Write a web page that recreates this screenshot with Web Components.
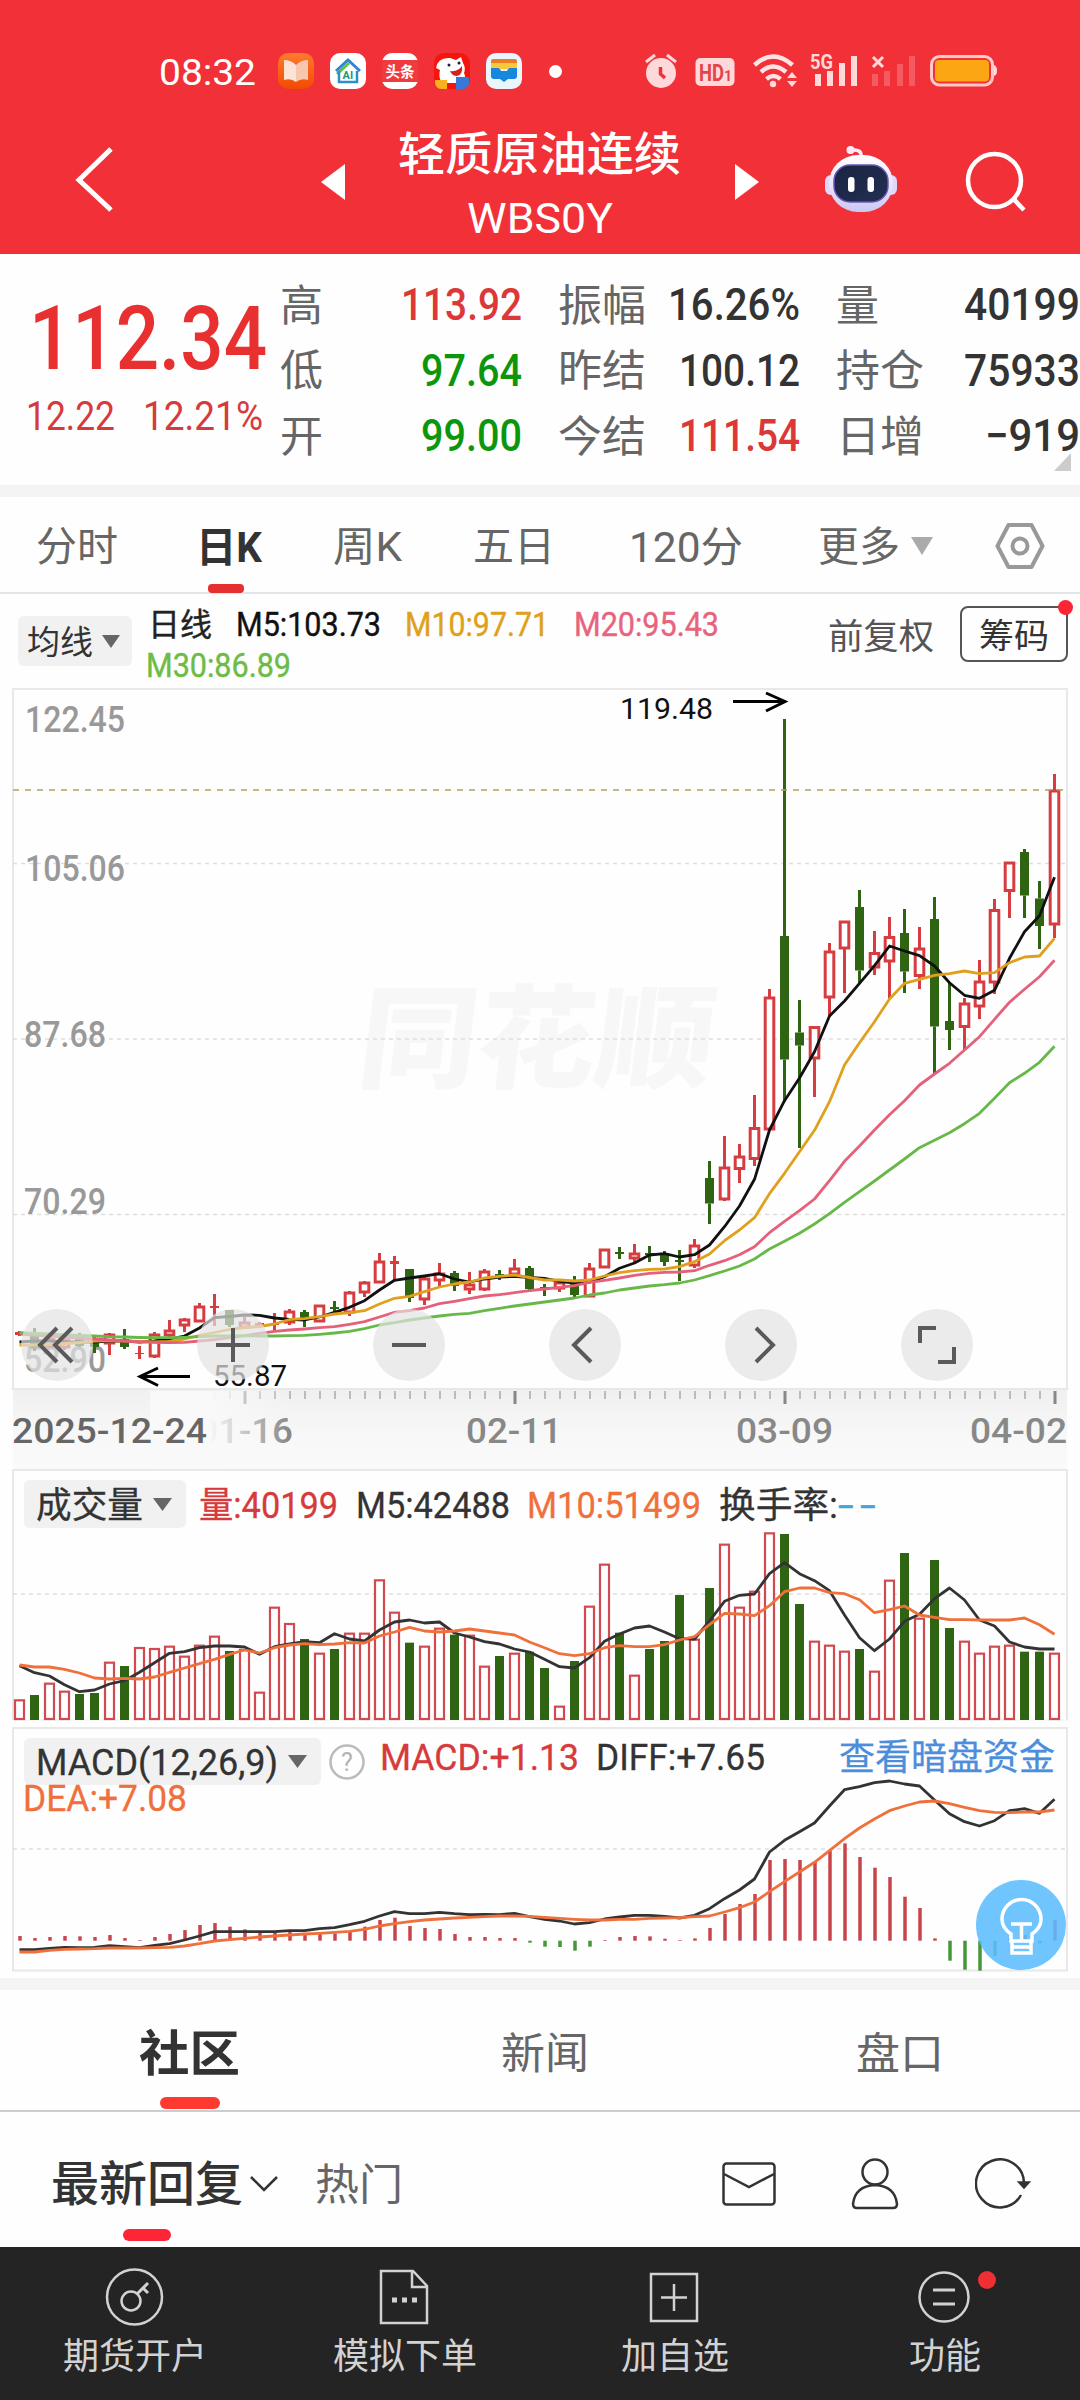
<!DOCTYPE html>
<html lang="zh-CN">
<head>
<meta charset="UTF-8">
<title>轻质原油连续 WBS0Y</title>
<style>
  html, body {
    margin: 0;
    background: #fefefe;
  }
  body {
    width: 1080px;
    height: 2400px;
    overflow: hidden;
    font-family: Roboto, "Noto Sans CJK SC", sans-serif;
    color: #333;
  }
</style>
</head>
<body>
<stock-page></stock-page>

<script>
/* text squeezed or stretched to a fixed width (w), s is the font size */
class FitText extends HTMLElement {
  constructor() {
    super();
    this.attachShadow({ mode: "open" });
    this.shadowRoot.innerHTML = `
      <style>
        :host { display: block; flex: none; }
        span { display: inline-block; white-space: nowrap; transform-origin: 0 50%; }
      </style>
      <span><slot></slot></span>`;
  }
  connectedCallback() {
    const size = this.getAttribute("s");
    const width = Number(this.getAttribute("w"));
    this.style.fontSize = size + "px";
    this.style.width = width + "px";
    this.style.height = this.style.lineHeight = Math.round(size * 1.2) + "px";
    const span = this.shadowRoot.querySelector("span");
    const natural = span.getBoundingClientRect().width;
    span.style.transform = `translateY(1.5px) scaleX(${width / natural})`;
  }
}
customElements.define("fit-text", FitText);

/* base for the static sections */
class Section extends HTMLElement {
  constructor() {
    super();
    this.attachShadow({ mode: "open" });
  }
  connectedCallback() {
    const template = document.createElement("template");
    template.innerHTML = `<style>:host { display: block; } * { box-sizing: border-box; } svg { display: block; }${this.getStyles()}</style>${this.getTemplate()}`;
    this.shadowRoot.appendChild(template.content.cloneNode(true));
  }
}

class StatusBar extends Section {
  getStyles() {
    return `
      :host { height: 101px; color: #fff; }
      .row { display: flex; align-items: center; padding-top: 41px; height: 101px; }
      .apps { display: flex; gap: 16px; margin-left: 22px; }
      .dot { width: 13px; height: 13px; border-radius: 50%; background: #fff; margin-left: 27px; }
      .system { margin-left: 78px; }
    `;
  }
  getTemplate() {
    return `
      <div class="row">
        <fit-text w="97" s="37" style="margin-left:159px">08:32</fit-text>
        <div class="apps">
          <svg width="36" height="36" viewBox="0 0 36 36">
            <defs><linearGradient id="a" x2="0" y2="1"><stop stop-color="#ff7a2d"/><stop offset="1" stop-color="#f24a04"/></linearGradient></defs>
            <rect width="36" height="36" rx="10" fill="url(#a)"/>
            <path d="M6 7q7 0 12 5v17q-5-4-12-2z" fill="#fde3d6"/><path d="M30 7q-7 0-12 5v17q5-4 12-2z" fill="#f7c6ae"/>
          </svg>
          <svg width="36" height="36" viewBox="0 0 36 36">
            <rect width="36" height="36" rx="10" fill="#fff"/>
            <path d="M6 18L18 7l12 11" fill="none" stroke="#2e86d8" stroke-width="3"/>
            <path d="M7 21L19 10" stroke="#5cc14a" stroke-width="3"/>
            <path d="M9 18v11h18V18" fill="none" stroke="#2b8fc9" stroke-width="2.500"/>
            <text x="12.500" y="26" font-size="11" font-weight="700" fill="#22977f">AI</text>
          </svg>
          <svg width="36" height="36" viewBox="0 0 36 36">
            <rect width="36" height="36" rx="10" fill="#fff"/>
            <rect y="7" width="36" height="22" fill="#ef3b3d"/>
            <text x="3.500" y="23.500" font-size="14.500" font-weight="700" fill="#fff">头条</text>
          </svg>
          <svg width="36" height="36" viewBox="0 0 36 36">
            <rect width="36" height="36" rx="10" fill="#f5150c"/>
            <path d="M2 15Q4 4 16 5l6 2 5-3 2 6q3 5 1 10 4 8-8 10H8Q4 24 6 17z" fill="#fff"/>
            <path d="M16 18q8 1 12-5 1 9-5 10-5 0-7-5" fill="#d5221f"/>
            <circle cx="15" cy="12" r="1.500" fill="#222"/><circle cx="25" cy="10" r="1.500" fill="#222"/>
            <path d="M1 27h12v9H8q-6 0-7-6z" fill="#fbb11c"/><path d="M22 24h13v7q-2 5-7 5h-6z" fill="#3878d8"/>
          </svg>
          <svg width="36" height="36" viewBox="0 0 36 36">
            <rect width="36" height="36" rx="10" fill="#e9f6fd"/>
            <rect x="5" y="6" width="26" height="7" rx="2" fill="#ef7c22"/>
            <rect x="5" y="10" width="26" height="6" fill="#f8c73a"/>
            <path d="M5 15h7q2 0 3 3h6q1-3 3-3h7v8q0 3-3 3h-6l-4 3-4-3H8q-3 0-3-3z" fill="#1687dc"/>
          </svg>
        </div>
        <div class="dot"></div>
        <svg class="system" width="362" height="40" viewBox="640 51 362 40" fill="#ffd9d9">
          <circle cx="661" cy="73" r="15"/>
          <path d="M646 62l9-7M676 62l-9-7" stroke="#ffd9d9" stroke-width="3"/>
          <path d="M660.500 67v7l4.500 4" stroke="#f23038" stroke-width="3.500" fill="none"/>
          <rect x="695.500" y="58" width="39" height="28" rx="5"/>
          <text x="699" y="81" font-size="23" font-weight="700" fill="#e2444c" textLength="25" lengthAdjust="spacingAndGlyphs">HD</text>
          <text x="724" y="81" font-size="14" font-weight="700" fill="#e2444c">1</text>
          <g fill="none" stroke="#ffe3e3" stroke-width="4.500">
            <path d="M754.500 65q18.500-17 38 0M761 72q12-11 25 0M766.500 79q7-6 14 0"/>
          </g>
          <circle cx="773" cy="84" r="3.200"/>
          <path d="M787 78l5-6 5 6zM787 81h10l-5 6z"/>
          <text x="810" y="69" font-size="21" font-weight="700" textLength="23" lengthAdjust="spacingAndGlyphs">5G</text>
          <path d="M815 74h6v12h-6zM827 71h6v15h-6zM839 63h6v23h-6zM851 56h6v30h-6z"/>
          <path d="M873 57l10 10M883 57l-10 10" stroke="#ffd9d9" stroke-width="3"/>
          <path opacity=".25" d="M872 74h6v12h-6zM884 71h6v15h-6zM897 64h6v22h-6zM909 56h6v30h-6z"/>
          <rect x="931.500" y="56.500" width="61" height="28.500" rx="8" fill="none" stroke="#ffc9c9" stroke-width="3"/>
          <rect x="935" y="60" width="54" height="21.500" rx="4" fill="#fda613"/>
          <path d="M994 65q3 1 3 5.500t-3 5.500z"/>
        </svg>
      </div>`;
  }
}
customElements.define("status-bar", StatusBar);

class NavHeader extends Section {
  getStyles() {
    return `
      :host { height: 153px; color: #fff; }
      .row { display: flex; }
      .row > svg { margin-top: 41px; }
      .title { display: flex; flex-direction: column; align-items: center; margin: 24px 54px 0 53px; }
    `;
  }
  getTemplate() {
    return `
      <div class="row">
        <svg style="margin-left:70px" width="50" height="76" viewBox="70 142 50 76"><path d="M111 149L79 180l32 30" fill="none" stroke="#fff" stroke-width="5"/></svg>
        <svg style="margin-left:201px" width="24" height="76" viewBox="321 142 24 76"><path d="M321 182l24-18v36z" fill="#fff"/></svg>
        <div class="title">
          <fit-text w="283" s="46" style="font-weight:500">轻质原油连续</fit-text>
          <fit-text w="146" s="43" style="margin-top:10px">WBS0Y</fit-text>
        </div>
        <svg width="24" height="76" viewBox="735 142 24 76"><path d="M759 182l-24-18v36z" fill="#fff"/></svg>
        <svg style="margin-left:61px" width="82" height="76" viewBox="820 142 82 76">
          <defs>
            <linearGradient id="s" x2="0" y2="1"><stop stop-color="#fff"/><stop offset=".6" stop-color="#e6e0fc"/><stop offset="1" stop-color="#c9c8f2"/></linearGradient>
            <linearGradient id="f" x2="1" y2="1"><stop stop-color="#1a2442"/><stop offset="1" stop-color="#232f52"/></linearGradient>
          </defs>
          <path d="M861 157q1-8-9-7" fill="none" stroke="#f3edff" stroke-width="3.500"/><circle cx="850.500" cy="150" r="4" fill="#fbe9f4"/>
          <rect x="825" y="175" width="12" height="20" rx="6" fill="#ded9f8"/><rect x="885" y="175" width="12" height="20" rx="6" fill="#ded9f8"/>
          <rect x="829" y="155" width="64" height="57" rx="29" fill="url(#s)"/>
          <rect x="834" y="165" width="54" height="37" rx="16" fill="url(#f)" stroke="#6a55b5" stroke-width="1.500"/>
          <rect x="848" y="177" width="6.500" height="15" rx="3" fill="#fff"/><rect x="867.500" y="177" width="6.500" height="15" rx="3" fill="#fff"/>
        </svg>
        <svg style="margin-left:58px" width="70" height="76" viewBox="960 142 70 76"><circle cx="994.500" cy="180.500" r="26.500" fill="none" stroke="#fff" stroke-width="4.500"/><path d="M1013.500 199l10.500 11" stroke="#fff" stroke-width="4.500"/></svg>
      </div>`;
  }
}
customElements.define("nav-header", NavHeader);

class QuotePanel extends Section {
  getStyles() {
    return `
      :host { height: 231px; position: relative; }
      .panel { display: flex; }
      .price { width: 280px; padding: 29px 0 0 29px; color: #e93030; }
      .change { display: flex; gap: 28px; margin-left: -3px; color: #d63a3c; }
      .col { width: 242px; margin-right: 36px; padding-top: 17px; }
      .col:last-child { margin-right: 0; width: 244px; }
      .row { display: flex; justify-content: space-between; align-items: center; height: 65.500px; color: #666; }
      .row fit-text:last-child { font-weight: 500; color: #333; }
      .row .up { color: #dc3838 !important; }
      .row .down { color: #0c960c !important; }
      .more { position: absolute; right: 9px; bottom: 14px; }
    `;
  }
  row(label, lw, value, vw, cls) {
    return `<div class="row"><fit-text w="${lw}" s="43">${label}</fit-text><fit-text class="${cls || ""}" w="${vw}" s="44.500">${value}</fit-text></div>`;
  }
  getTemplate() {
    return `
      <div class="panel">
        <div class="price">
          <fit-text w="238" s="89" style="font-weight:500">112.34</fit-text>
          <div class="change"><fit-text w="89" s="41">12.22</fit-text><fit-text w="120" s="41">12.21%</fit-text></div>
        </div>
        <div class="col">
          ${this.row("高", 43, "113.92", 121, "up")}
          ${this.row("低", 43, "97.64", 101, "down")}
          ${this.row("开", 43, "99.00", 101, "down")}
        </div>
        <div class="col">
          ${this.row("振幅", 88, "16.26%", 132)}
          ${this.row("昨结", 88, "100.12", 121)}
          ${this.row("今结", 88, "111.54", 121, "up")}
        </div>
        <div class="col">
          ${this.row("量", 43, "40199", 116)}
          ${this.row("持仓", 88, "75933", 116)}
          ${this.row("日增", 88, "−919", 95)}
        </div>
      </div>
      <svg class="more" width="17" height="18"><path d="M17 0v18H0z" fill="#ccc"/></svg>`;
  }
}
customElements.define("quote-panel", QuotePanel);

class PeriodTabs extends Section {
  getStyles() {
    return `
      :host { border-top: 12px solid #f4f4f4; height: 109px; border-bottom: 2px solid #e3e6e8; box-sizing: border-box; }
      .row { display: flex; align-items: center; height: 97px; color: #666; }
      .on { position: relative; color: #333; font-weight: 700; }
      .on i { position: absolute; left: 12px; top: 63px; width: 36px; height: 9px; border-radius: 4px; background: #e63030; }
    `;
  }
  getTemplate() {
    return `
      <div class="row">
        <fit-text w="82" s="41" style="margin-left:36px">分时</fit-text>
        <div class="on" style="margin-left:78px"><fit-text w="66" s="42">日K</fit-text><i></i></div>
        <fit-text w="69" s="41" style="margin-left:71px">周K</fit-text>
        <fit-text w="82" s="41" style="margin-left:71px">五日</fit-text>
        <fit-text w="114" s="42" style="margin-left:74px">120分</fit-text>
        <fit-text w="82" s="41" style="margin-left:75px">更多</fit-text>
        <svg style="margin-left:11px" width="22" height="18"><path d="M0 0h22L11 18z" fill="#aaa"/></svg>
        <svg style="margin-left:62px" width="50" height="48" viewBox="0 0 50 48" fill="none" stroke="#999" stroke-width="4">
          <path d="M13.500 3h23L47.500 24l-11 21h-23L2.500 24z" stroke-linejoin="round"/><circle cx="25" cy="24" r="7.500"/>
        </svg>
      </div>`;
  }
}
customElements.define("period-tabs", PeriodTabs);

class MaLegend extends Section {
  getStyles() {
    return `
      :host { height: 94px; }
      .row { display: flex; align-items: center; height: 94px; }
      .pick { display: flex; align-items: center; width: 114px; height: 50px; margin-left: 18px; padding-left: 9px; background: #f1f1f1; border-radius: 6px; }
      .lines { flex: 1; margin: 5px 0 0 15px; }
      .line { display: flex; align-items: center; height: 41px; }
      .line fit-text { -webkit-text-stroke: .4px; }
      .chips { position: relative; width: 108px; height: 56px; margin: 0 12px 14px 26px; padding: 6px 0 0 17px; border: 2px solid #555; border-radius: 8px; }
      .chips i { position: absolute; right: -7px; top: -8px; width: 15px; height: 15px; border-radius: 50%; background: #fb2535; }
    `;
  }
  getTemplate() {
    return `
      <div class="row">
        <div class="pick"><fit-text w="66" s="33">均线</fit-text><svg style="margin-left:9px" width="18" height="13"><path d="M0 0h18L9 13z" fill="#666"/></svg></div>
        <div class="lines">
          <div class="line">
            <fit-text w="64" s="32" style="margin-left:1px;color:#222">日线</fit-text>
            <fit-text w="145" s="32.500" style="margin-left:24px;color:#111">M5:103.73</fit-text>
            <fit-text w="144" s="32.500" style="margin-left:24px;color:#dfa01c">M10:97.71</fit-text>
            <fit-text w="145" s="32.500" style="margin-left:25px;color:#e8637c">M20:95.43</fit-text>
          </div>
          <div class="line"><fit-text w="145" s="32.500" style="margin-left:-1px;color:#6cbc46">M30:86.89</fit-text></div>
        </div>
        <fit-text w="106" s="35" style="margin-bottom:11px;color:#555">前复权</fit-text>
        <div class="chips"><fit-text w="70" s="34">筹码</fit-text><i></i></div>
      </div>`;
  }
}
customElements.define("ma-legend", MaLegend);

/* ---------- charts ---------- */
const RED = "#d63c40";
const GREEN = "#2f6412";
const xAt = (i) => 19.5 + 15 * i;
const polyline = (ys, color, top, scale) =>
  `<polyline points="${ys.map((y, i) => xAt(i) + "," + (top + y / scale).toFixed(1)).join(" ")}" fill="none" stroke="${color}" stroke-width="2.800" stroke-linejoin="round"/>`;
const gridLine = (y, color = "#dedede", dash = "4 4") =>
  `<path d="M13 ${y}H1066" stroke="${color}" stroke-width="1.500" stroke-dasharray="${dash}"/>`;
const label = (x, y, w, size, color, text, weight = 400) =>
  `<text x="${x}" y="${y}" font-size="${size}" font-weight="${weight}" fill="${color}" textLength="${w}" lengthAdjust="spacingAndGlyphs">${text}</text>`;

/* [up, high, body top, body bottom, low] */
const CANDLES = [
  [1,1331,1332,1335,1336],[0,1328,1336,1348,1351],[1,1335,1338,1346,1348],[1,1336,1339,1347,1350],[0,1333,1337,1346,1347],
  [0,1337,1342,1347,1353],[1,1333,1334,1343,1355],[0,1329,1339,1347,1349],[1,1346,1353,1354,1359],[1,1332,1334,1356,1358],
  [1,1320,1330,1335,1337],[1,1318,1319,1325,1332],[1,1303,1306,1321,1321],[1,1294,1306,1308,1326],[0,1310,1310,1325,1327],
  [1,1317,1322,1327,1328],[1,1322,1323,1327,1328],[1,1313,1323,1325,1332],[1,1309,1311,1322,1325],[0,1310,1312,1318,1327],
  [1,1305,1305,1321,1321],[0,1301,1307,1309,1312],[1,1291,1292,1312,1316],[1,1281,1282,1292,1297],[1,1253,1261,1282,1282],
  [1,1256,1261,1264,1280],[0,1269,1269,1298,1302],[1,1277,1278,1299,1305],[1,1263,1273,1280,1286],[0,1271,1273,1286,1291],
  [1,1272,1284,1289,1294],[1,1269,1271,1289,1291],[0,1270,1274,1276,1280],[1,1259,1268,1274,1274],[0,1266,1268,1289,1292],
  [0,1284,1287,1289,1296],[1,1279,1282,1288,1292],[0,1276,1284,1295,1297],[1,1263,1268,1296,1296],[1,1249,1249,1267,1267],
  [0,1247,1252,1254,1259],[1,1244,1253,1258,1262],[0,1246,1253,1255,1262],[0,1251,1255,1262,1266],[0,1250,1260,1262,1281],
  [1,1239,1245,1265,1268],[0,1161,1178,1203.5,1224],[1,1136,1167,1199,1201],[1,1144,1156,1168.5,1183],[1,1095,1127.5,1158.5,1166],
  [1,989,997,1129,1129],[0,719,936,1059.5,1102],[0,1000,1032.5,1045.5,1148],[1,1026,1026.5,1058,1097],[1,943,951,997,1017],
  [1,921,921,948,993],[0,890,907,970.5,983],[1,931,952.5,967,975],[1,917,936.5,961,999],[0,909,933,971.5,993],
  [1,927,948,975.5,989],[0,897,919,1026.5,1073],[0,982,1021,1030,1050],[1,998,1003,1026.5,1050],[1,960,981,1006,1019],
  [1,899,909.5,982,994],[1,862,862,890.5,918],[0,849,852,895.5,918],[0,881,898.5,926,949],[1,774,790,924,938]
];
const M5 = [1342,1341,1341,1342,1342,1342,1341,1341,1342,1341,1339,1336,1328,1317.7,1316.5,1315,1315.3,1318,1319.3,1320,1317,1312.3,1307.3,1300.7,1290,1280.3,1278,1276,1273.7,1279,1282,1279,1277,1276.3,1277.5,1278.3,1281.3,1283,1282.3,1276.7,1268.3,1263,1255,1253.7,1257,1254.7,1245,1226.7,1206,1179.3,1130,1100.7,1078,1051.7,1016,1001,983.3,965.7,946,951,955.7,966,982.7,995.3,998.3,990.3,958.3,931.7,915.7,877.3];
const M10 = [1345,1345,1344.5,1343.5,1342.5,1341,1340.5,1341,1341.5,1342,1341.5,1339,1335.5,1332.5,1329.5,1327.5,1326.5,1324,1319.5,1318.7,1316.7,1314,1312.7,1310.7,1304,1298.3,1296.3,1291.7,1287,1284,1282,1278,1276.3,1275,1277.5,1280,1280,1281,1280,1276,1272.7,1270.7,1269.3,1269,1266.7,1261.7,1254,1240.7,1230,1217.7,1193.7,1173.3,1151.7,1130.3,1101.7,1065,1042.7,1021.7,999,983.3,979.3,975.3,973.7,971,973.7,972.7,962.7,957,956,938.3];
const M20 = [1334,1335,1336,1337,1338,1339,1340,1341,1341.7,1342.3,1342.7,1342.3,1341,1339.7,1337.7,1335.7,1333.3,1331.3,1330,1329,1327.7,1326.7,1324.3,1321.7,1317,1312.3,1310.7,1308,1303.7,1301.3,1298.7,1296,1294.7,1292.7,1290.7,1289,1287.3,1285.7,1282.3,1280.3,1278,1275.3,1273.3,1272.3,1272,1270.7,1265.3,1260.7,1254.7,1246.7,1232.7,1221.3,1210.7,1199,1180.7,1161.3,1146,1130,1114.7,1100.7,1085,1074,1063.3,1050,1036.7,1019.3,1002.3,989.3,976.7,960.3];
const M30 = [1332.7,1333.5,1334,1335,1335.5,1336,1336.7,1337,1337.5,1337.7,1337.7,1337.3,1336.7,1336,1336,1335.7,1336,1336,1335.7,1335.3,1334.3,1333,1331.3,1328.7,1325,1322.7,1320,1318,1316,1314.3,1313.3,1310.7,1308.3,1306,1304,1302,1300,1298,1295,1293,1290,1288,1286,1284.7,1283,1280,1275.7,1271,1266,1259,1249,1241.3,1233.3,1224,1213.7,1202.3,1191.7,1181,1170,1159,1147.7,1140.3,1132.7,1123.7,1113.3,1098.3,1082.7,1073.3,1062.3,1046.3];

class KlineChart extends Section {
  getStyles() {
    return `
      .stack { display: grid; }
      .stack > * { grid-area: 1 / 1; }
      .tools { display: flex; gap: 104px; align-self: start; margin: 621px 0 0 21px; }
      .tools svg { border-radius: 50%; background: rgba(226, 226, 226, .7); fill: none; stroke: #5a5a5a; stroke-width: 4; }
    `;
  }
  candle([up, high, top, bottom, low], i) {
    const x = xAt(i);
    const color = up ? RED : GREEN;
    const wick = `<path d="M${x} ${high}V${top}M${x} ${bottom}V${low}" stroke="${color}" stroke-width="3"/>`;
    if (!up || bottom - top < 5) {
      return wick + `<rect x="${x - 4.5}" y="${top}" width="9" height="${bottom - top}" fill="${color}"/>`;
    }
    return wick + `<rect x="${x - 4.3}" y="${top + 1}" width="8.600" height="${bottom - top - 1}" fill="#fff" stroke="${color}" stroke-width="3"/>`;
  }
  ticks() {
    let d = "", major = "";
    for (let i = 13; i < 70; i++) {
      if ((i - 15) % 18 === 0) major += `M${xAt(i) + .5} 1391v13`;
      else d += `M${xAt(i) + .5} 1391v8`;
    }
    return `<path d="${d}" stroke="#bbb" stroke-width="2"/><path d="${major}" stroke="#888" stroke-width="3"/>`;
  }
  getTemplate() {
    return `
      <div class="stack">
        <svg width="1080" height="781" viewBox="0 688 1080 781">
          <defs>
            <linearGradient id="strip" x2="0" y2="1"><stop stop-color="#f0f0f0"/><stop offset=".6" stop-color="#f8f8f8"/><stop offset="1" stop-color="#fafafa"/></linearGradient>
            <linearGradient id="fade"><stop stop-color="#f9f9f9"/><stop offset="1" stop-color="#f9f9f9" stop-opacity="0"/></linearGradient>
          </defs>
          <rect x="13" y="1390" width="1054" height="79" fill="url(#strip)"/>
          <g transform="translate(355 1079) skewX(-7)"><text font-size="112" font-weight="900" fill="#f7f7f7" textLength="355" lengthAdjust="spacingAndGlyphs">同花顺</text></g>
          <rect x="13" y="689" width="1054" height="700" fill="none" stroke="#e8e8e8" stroke-width="2"/>
          ${gridLine(863.5)}${gridLine(1039)}${gridLine(1214.5)}
          ${label(25, 732, 100, 36, "#999", "122.45", 500)}
          ${label(25, 881, 100, 36, "#999", "105.06", 500)}
          ${label(24, 1047, 82, 36, "#999", "87.68", 500)}
          ${label(24, 1214, 82, 36, "#999", "70.29", 500)}
          ${label(24, 1372, 82, 36, "#999", "52.90", 500)}
          ${CANDLES.map((c, i) => this.candle(c, i)).join("")}
          ${gridLine(790, "#b3a15c", "6 6")}
          ${polyline(M5, "#111", 0, 1)}${polyline(M10, "#e0a01e", 0, 1)}${polyline(M20, "#e5607a", 0, 1)}${polyline(M30, "#68b848", 0, 1)}
          ${label(620, 719, 93, 30, "#111", "119.48")}
          <path d="M733 701.500h51M766 693l19 8.500-19 9.500" fill="none" stroke="#000" stroke-width="3"/>
          ${label(213, 1386, 74, 30, "#111", "55.87")}
          <path d="M190 1376.500h-50M158 1368l-18 8.500 18 9" fill="none" stroke="#000" stroke-width="3"/>
          ${this.ticks()}
          ${label(197, 1443, 96, 35, "#888", "01-16", 500)}
          <rect x="150" y="1391" width="60" height="77" fill="#f9f9f9"/>
          <rect x="209" y="1391" width="80" height="77" fill="url(#fade)"/>
          ${label(12, 1443, 195, 35, "#666", "2025-12-24", 500)}
          ${label(466, 1443, 96, 35, "#888", "02-11", 500)}
          ${label(736, 1443, 97, 35, "#888", "03-09", 500)}
          ${label(970, 1443, 97, 35, "#888", "04-02", 500)}
        </svg>
        <div class="tools">
          <svg width="72" height="72"><path d="M36 19L19 36l17 17M51 19L34 36l17 17"/></svg>
          <svg width="72" height="72"><path d="M36 19v34M19 36h34"/></svg>
          <svg width="72" height="72"><path d="M19 36h34"/></svg>
          <svg width="72" height="72"><path d="M42 19L25 36l17 17"/></svg>
          <svg width="72" height="72"><path d="M31 19l17 17-17 17"/></svg>
          <svg width="72" height="72"><path d="M19 34V19h16M37 53h16V38"/></svg>
        </div>
      </div>`;
  }
}
customElements.define("kline-chart", KlineChart);

/* negative: down day; values are bar heights in thirds of a pixel */
const VOLUME = [62,-75,112,88,-78,-81,175,-162,219,216,223,193,226,253,-207,213,85,340,291,-243,202,-213,262,262,422,325,-232,223,277,-256,256,163,-192,202,-205,-156,43,-177,343,469,-262,136,-213,-237,-375,244,-396,529,340,388,563,-558,-348,238,226,208,-213,148,421,-501,307,-480,-276,238,202,223,226,-205,-205,202];
const VOL5 = [617,638,648,674,695,690,672,662,637,608,580,575,563,558,558,561,583,560,552,545,548,521,537,543,510,486,480,489,486,519,531,545,552,567,576,598,620,624,593,544,522,504,498,516,536,537,483,424,406,402,341,308,341,362,392,465,533,572,537,484,463,416,384,420,480,498,546,561,567,567];
const VOL10 = [615,621,621,628,639,654,657,655,657,651,637,624,611,598,583,570,579,563,555,551,554,552,548,549,528,516,502,513,516,513,507,513,519,525,546,563,581,587,581,563,557,560,560,554,540,530,494,460,462,467,437,395,384,384,398,401,419,458,449,438,465,472,479,479,480,480,480,474,494,523];

class VolumeChart extends Section {
  getStyles() {
    return `
      .stack { display: grid; }
      .stack > * { grid-area: 1 / 1; }
      .row { display: flex; align-items: center; align-self: start; height: 48px; margin: 11px 0 0 24px; -webkit-text-stroke: .3px; }
      .pick { display: flex; align-items: center; width: 162px; height: 48px; padding-left: 12px; background: #f1f1f1; border-radius: 6px; }
    `;
  }
  bar(v, i) {
    const h = Math.abs(v) / 3;
    const x = xAt(i);
    if (v < 0) return `<rect x="${x - 4.5}" y="${1720 - h}" width="9" height="${h}" fill="${GREEN}"/>`;
    return `<rect x="${x - 4.5}" y="${1721 - h}" width="9" height="${h - 2}" fill="#fff" stroke="#d04a50" stroke-width="2.200"/>`;
  }
  getTemplate() {
    return `
      <div class="stack">
        <svg width="1080" height="258" viewBox="0 1469 1080 258">
          <path d="M13 1720V1470H1067V1720" fill="none" stroke="#e8e8e8" stroke-width="2"/>
          <path d="M13 1720H1067" stroke="#f0f0f0" stroke-width="1"/>
          ${gridLine(1594)}
          ${VOLUME.map((v, i) => this.bar(v, i)).join("")}
          ${polyline(VOL5, "#333", 1460, 3)}${polyline(VOL10, "#f0703c", 1460, 3)}
        </svg>
        <div class="row">
          <div class="pick"><fit-text w="107" s="36">成交量</fit-text><svg style="margin-left:10px" width="19" height="13"><path d="M0 0h19L9.500 13z" fill="#666"/></svg></div>
          <fit-text w="139" s="36" style="margin-left:13px;color:#d63a3c">量:40199</fit-text>
          <fit-text w="154" s="36" style="margin-left:18px">M5:42488</fit-text>
          <fit-text w="174" s="36" style="margin-left:17px;color:#f0703c">M10:51499</fit-text>
          <fit-text w="119" s="36" style="margin-left:18px">换手率:</fit-text>
          <fit-text w="44" s="36" style="letter-spacing:4px;color:#45a3d9">--</fit-text>
        </div>
      </div>`;
  }
}
customElements.define("volume-chart", VolumeChart);

const HIST = [14,8,11,14,13,11,17,8,2,11,20,32,47,53,42,34,26,26,26,17,22,22,26,42,62,69,44,38,35,20,11,11,8,8,-6,-18,-19,-30,-18,2,11,14,13,6,2,7,38,80,110,140,242,245,242,236,270,292,251,219,191,132,98,7,-60,-87,-90,-46,7,17,-8,62];
const DIFF = [689,689,685,682,683,682,677,680,683,676,671,660,648,635,635,635,635,635,632,632,626,623,614,604,588,575,581,581,577,581,584,583,584,580,590,598,603,612,608,597,591,586,586,589,594,586,566,536,510,477,396,361,335,309,258,209,200,188,183,192,198,240,281,305,318,302,272,266,280,238];
const DEA = [696,696,691,688,687,686,684,684,684,683,682,678,671,663,659,655,651,648,645,642,640,637,634,628,618,611,605,600,597,594,592,590,588,588,589,592,595,598,600,600,598,598,595,594,593,590,588,576,563,546,515,485,456,427,392,356,324,297,272,258,246,243,251,262,272,277,278,276,276,270];

class MacdChart extends Section {
  getStyles() {
    return `
      .stack { display: grid; }
      .stack > * { grid-area: 1 / 1; }
      .text { align-self: start; margin: 11px 0 0 24px; -webkit-text-stroke: .3px; }
      .row { display: flex; align-items: flex-start; height: 36px; }
      .pick { display: flex; align-items: center; width: 297px; height: 47px; padding-left: 12px; background: #f1f1f1; border-radius: 6px; }
      .help { margin: 6px 0 0 8px; }
      .tip { align-self: end; justify-self: end; margin: 0 14px 8px 0; }
    `;
  }
  getTemplate() {
    return `
      <div class="stack">
        <svg width="1080" height="251" viewBox="0 1727 1080 251">
          <rect x="13" y="1728" width="1054" height="242.500" fill="none" stroke="#e8e8e8" stroke-width="2"/>
          ${gridLine(1849)}
          ${HIST.map((v, i) => `<path d="M${xAt(i) + .5} 1940.700v${-v / 3}" stroke="${v < 0 ? "#45973a" : "#c9434b"}" stroke-width="3.500"/>`).join("")}
          ${polyline(DIFF, "#333", 1720, 3)}${polyline(DEA, "#f0703c", 1720, 3)}
        </svg>
        <div class="text">
          <div class="row">
            <div class="pick"><fit-text w="242" s="36">MACD(12,26,9)</fit-text><svg style="margin-left:10px" width="19" height="13"><path d="M0 0h19L9.500 13z" fill="#666"/></svg></div>
            <svg class="help" width="36" height="36"><circle cx="18" cy="18" r="16.500" fill="none" stroke="#bbb" stroke-width="2.500"/><text x="18" y="27" text-anchor="middle" font-size="25" fill="#b3b3b3">?</text></svg>
            <fit-text w="199" s="36" style="margin:-3px 0 0 15px;color:#d63a3c">MACD:+1.13</fit-text>
            <fit-text w="169" s="36" style="margin:-3px 0 0 17px">DIFF:+7.65</fit-text>
            <fit-text w="216" s="36" style="margin:-3px 0 0 74px;color:#4c8edb">查看暗盘资金</fit-text>
          </div>
          <fit-text w="164" s="36" style="margin:2px 0 0 -1px;color:#f0703c">DEA:+7.08</fit-text>
        </div>
        <svg class="tip" width="90" height="90" viewBox="0 0 90 90">
          <circle cx="45" cy="45" r="45" fill="#5cbcff" opacity=".87"/>
          <g fill="none" stroke="#fff" stroke-width="3.500"><path d="M35 61V54q-9-6-9-15a19 19 0 0 1 39 0q0 9-9 15v7zM36 61v12h19V61M35 44h21M45.500 44v16M37 67h17"/></g>
        </svg>
      </div>`;
  }
}
customElements.define("macd-chart", MacdChart);

class ForumTabs extends Section {
  getStyles() {
    return `
      :host { border-top: 12px solid #f4f4f4; border-bottom: 2px solid #ccc; color: #666; }
      .row { display: flex; align-items: center; height: 120px; padding-top: 4px; }
      .on { position: relative; color: #333; font-weight: 700; margin-left: 139px; }
      .on i { position: absolute; left: 21px; top: 74px; width: 60px; height: 12px; border-radius: 6px; background: #fe3a30; }
    `;
  }
  getTemplate() {
    return `
      <div class="row">
        <div class="on"><fit-text w="101" s="49">社区</fit-text><i></i></div>
        <fit-text w="88" s="43" style="margin-left:261px">新闻</fit-text>
        <fit-text w="88" s="43" style="margin-left:267px">盘口</fit-text>
      </div>`;
  }
}
customElements.define("forum-tabs", ForumTabs);

class ForumFilter extends Section {
  getStyles() {
    return `
      :host { height: 135px; color: #333; }
      .row { display: flex; align-items: center; height: 141px; }
      .on { position: relative; margin-left: 51px; font-weight: 500; }
      .on i { position: absolute; left: 72px; top: 75px; width: 48px; height: 12px; border-radius: 6px; background: #fd2536; }
      .row > svg { fill: none; stroke: #333; stroke-width: 2.500; margin-top: 2px; }
    `;
  }
  getTemplate() {
    return `
      <div class="row">
        <div class="on"><fit-text w="192" s="48">最新回复</fit-text><i></i></div>
        <svg style="margin-left:7px" width="28" height="18"><path d="M1 2l13 13L27 2"/></svg>
        <fit-text w="88" s="43" style="margin-left:37px;color:#666">热门</fit-text>
        <svg style="margin-left:319px" width="54" height="44"><rect x="1.500" y="1.500" width="51" height="41" rx="3"/><path d="M2 12l25 13 25-13"/></svg>
        <svg style="margin-left:75px" width="48" height="52"><circle cx="24" cy="14" r="12.500"/><path d="M24 27q-20 1-22 19 0 4 4 4h36q4 0 4-4-2-18-22-19z"/></svg>
        <svg style="margin-left:76px" width="56" height="52"><path d="M46 37A24 24 0 1 1 49 25"/><path d="M44.500 24.500h9l-4.500 5z" fill="#333"/></svg>
      </div>`;
  }
}
customElements.define("forum-filter", ForumFilter);

class ToolBar extends Section {
  getStyles() {
    return `
      :host { background: #242424; height: 153px; color: #d2d2d2; }
      .bar { display: flex; }
      .item { width: 270px; display: flex; flex-direction: column; align-items: center; padding-top: 20px; }
      svg { fill: none; stroke: #d2d2d2; stroke-width: 2.500; }
      fit-text { margin-top: 7px; }
    `;
  }
  getTemplate() {
    return `
      <div class="bar">
        <div class="item">
          <svg width="60" height="60"><circle cx="29.500" cy="30" r="27.500"/><circle cx="26" cy="34" r="9.500"/><path d="M32 27l11-11M38 21l5 5" stroke-width="3"/></svg>
          <fit-text w="144" s="36">期货开户</fit-text>
        </div>
        <div class="item">
          <svg width="60" height="60"><path d="M6 4h32l14 15v37H6zM37 4v16h15"/><path d="M17 33h5M27 33h5M37 33h5" stroke-width="5"/></svg>
          <fit-text w="144" s="36">模拟下单</fit-text>
        </div>
        <div class="item">
          <svg width="60" height="60"><rect x="6" y="7" width="46" height="47"/><path d="M29 17v27M16 30.500h26"/></svg>
          <fit-text w="108" s="36">加自选</fit-text>
        </div>
        <div class="item">
          <svg width="60" height="60" overflow="visible"><circle cx="29" cy="30" r="24.500"/><path d="M18 23h22M18 37h22" stroke-width="3"/><circle cx="72" cy="13" r="9" fill="#ee2f33" stroke="none"/></svg>
          <fit-text w="72" s="36">功能</fit-text>
        </div>
      </div>`;
  }
}
customElements.define("tool-bar", ToolBar);

class StockPage extends Section {
  getStyles() {
    return `
      :host { display: flex; flex-direction: column; width: 1080px; }
      header { background: #f23038; }
    `;
  }
  getTemplate() {
    return `
      <header><status-bar></status-bar><nav-header></nav-header></header>
      <quote-panel></quote-panel>
      <period-tabs></period-tabs>
      <ma-legend></ma-legend>
      <kline-chart></kline-chart>
      <volume-chart></volume-chart>
      <macd-chart></macd-chart>
      <forum-tabs></forum-tabs>
      <forum-filter></forum-filter>
      <tool-bar></tool-bar>`;
  }
}
customElements.define("stock-page", StockPage);
</script>
</body>
</html>
